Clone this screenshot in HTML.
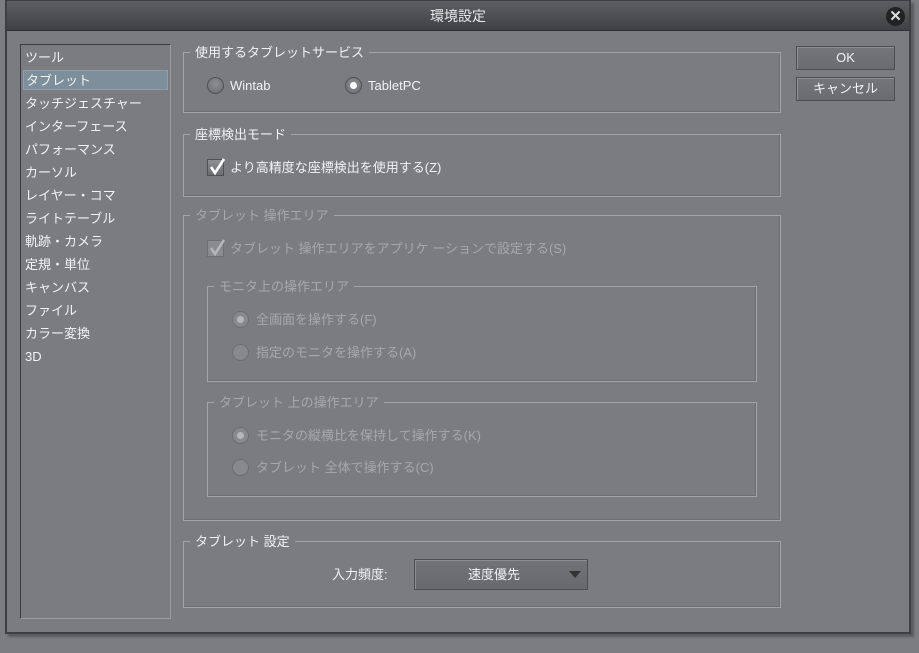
<!DOCTYPE html>
<html><head><meta charset="utf-8"><style>
*{margin:0;padding:0;box-sizing:border-box}
body{width:919px;height:653px;background:#7c7d81;font-family:"Liberation Sans","Noto Sans CJK JP",sans-serif;font-size:13px;color:#f2f2f2;position:relative;overflow:hidden}
.dlg{position:absolute;left:5px;top:0;width:906px;height:634px;background:#7b7c80;border:2px solid #3e3f42;border-top:1px solid #3e3f42;box-shadow:3px 3px 2px #5a5b5e}
.title{position:absolute;left:0;top:0;right:0;height:30px;background:linear-gradient(#5e5f62,#3f4043);border-bottom:1px solid #2e2f31;text-align:center;line-height:31px;font-size:14px;color:#e8e8e8}
.close{position:absolute;right:4px;top:6px;width:19px;height:19px;border-radius:50%;background:#222;color:#ddd;font-size:15px;font-weight:bold;line-height:19px;text-align:center}
.a{position:absolute}
.list{left:13px;top:43px;width:151px;height:575px;border:1px solid;border-color:#3a3b3e #9c9da0 #9c9da0 #3a3b3e}
.list div{height:23px;line-height:23px;padding-left:4px;font-size:13px}
.list .sel{background:#7d8f9b;margin:0 2px;padding-left:2px;height:20px;line-height:20px;margin-top:1px;margin-bottom:2px;border:1px solid #8ea0ab}
.grp{position:absolute;border:1px solid #a3a4a7;box-shadow:inset -1px -1px 0 #6d6e72}
.grp>.lg{position:absolute;top:-9px;left:6px;background:#7b7c80;padding:0 5px;line-height:18px;font-size:13px}
.dis{color:#a7a8ab}
.radio{position:absolute;width:17px;height:17px;border-radius:50%;background:radial-gradient(circle at 50% 40%,#8e8f93,#6a6b6f);border:1px solid #505154}
.radio.on::after{content:"";position:absolute;left:4px;top:4px;width:7px;height:7px;border-radius:50%;background:#fff}
.radio.d{border-color:#6c6d71;background:#88898d}
.radio.d.on::after{background:#b5b6b9}
.cb{position:absolute;width:17px;height:17px;background:linear-gradient(#8e8f93,#6c6d71);border:1px solid #505154}
.btn{position:absolute;left:789px;width:99px;height:24px;border:1px solid #4d4e51;background:linear-gradient(#75767a,#6a6b6f);text-align:center;line-height:22px;font-size:13px;box-shadow:inset 1px 1px 0 #8e8f93}
.t{position:absolute;white-space:nowrap;line-height:16px}
</style></head><body>
<div class="dlg">
<div class="title">環境設定</div>
<div class="close">✕</div>
<div class="a list">
<div style="margin-top:1px">ツール</div>
<div class="sel">タブレット</div>
<div>タッチジェスチャー</div>
<div>インターフェース</div>
<div>パフォーマンス</div>
<div>カーソル</div>
<div>レイヤー・コマ</div>
<div>ライトテーブル</div>
<div>軌跡・カメラ</div>
<div>定規・単位</div>
<div>キャンバス</div>
<div>ファイル</div>
<div>カラー変換</div>
<div>3D</div>
</div>
<div class="btn" style="top:45px">OK</div>
<div class="btn" style="top:76px">キャンセル</div>
</div>

<div class="grp" style="left:183px;top:52px;width:598px;height:61px"><span class="lg">使用するタブレットサービス</span></div>
<div class="radio" style="left:207px;top:77px"></div><div class="t" style="left:230px;top:78px">Wintab</div>
<div class="radio on" style="left:345px;top:77px"></div><div class="t" style="left:368px;top:78px">TabletPC</div>

<div class="grp" style="left:183px;top:134px;width:598px;height:63px"><span class="lg">座標検出モード</span></div>
<div class="cb" style="left:207px;top:159px"></div>
<svg class="a" style="left:207px;top:156px" width="20" height="20"><path d="M4 11 L8 17 L17 3" stroke="#fff" stroke-width="2.6" fill="none"/></svg>
<div class="t" style="left:230px;top:160px">より高精度な座標検出を使用する(Z)</div>

<div class="grp" style="left:183px;top:215px;width:598px;height:306px"><span class="lg dis">タブレット 操作エリア</span></div>
<div class="cb" style="left:207px;top:240px;border-color:#6c6d71;background:#8a8b8f"></div>
<svg class="a" style="left:207px;top:237px" width="20" height="20"><path d="M4 11 L8 17 L17 3" stroke="#b4b5b8" stroke-width="2.6" fill="none"/></svg>
<div class="t dis" style="left:230px;top:241px">タブレット 操作エリアをアプリケ ーションで設定する(S)</div>

<div class="grp" style="left:207px;top:286px;width:550px;height:96px"><span class="lg dis">モニタ上の操作エリア</span></div>
<div class="radio d on" style="left:232px;top:311px"></div><div class="t dis" style="left:256px;top:312px">全画面を操作する(F)</div>
<div class="radio d" style="left:232px;top:344px"></div><div class="t dis" style="left:256px;top:345px">指定のモニタを操作する(A)</div>

<div class="grp" style="left:207px;top:402px;width:550px;height:95px"><span class="lg dis">タブレット 上の操作エリア</span></div>
<div class="radio d on" style="left:232px;top:427px"></div><div class="t dis" style="left:256px;top:428px">モニタの縦横比を保持して操作する(K)</div>
<div class="radio d" style="left:232px;top:459px"></div><div class="t dis" style="left:256px;top:460px">タブレット 全体で操作する(C)</div>

<div class="grp" style="left:183px;top:541px;width:598px;height:67px"><span class="lg">タブレット 設定</span></div>
<div class="t" style="left:332px;top:567px">入力頻度:</div>
<div class="a" style="left:414px;top:559px;width:174px;height:31px;border:1px solid #4d4e51;background:linear-gradient(#727377,#68696d);box-shadow:inset 1px 1px 0 #8c8d91;text-align:center;line-height:29px;padding-right:28px;padding-left:14px">速度優先</div>
<svg class="a" style="left:568px;top:570px" width="14" height="10"><path d="M1 1 L13 1 L7 8 Z" fill="#333"/></svg>
</body></html>
